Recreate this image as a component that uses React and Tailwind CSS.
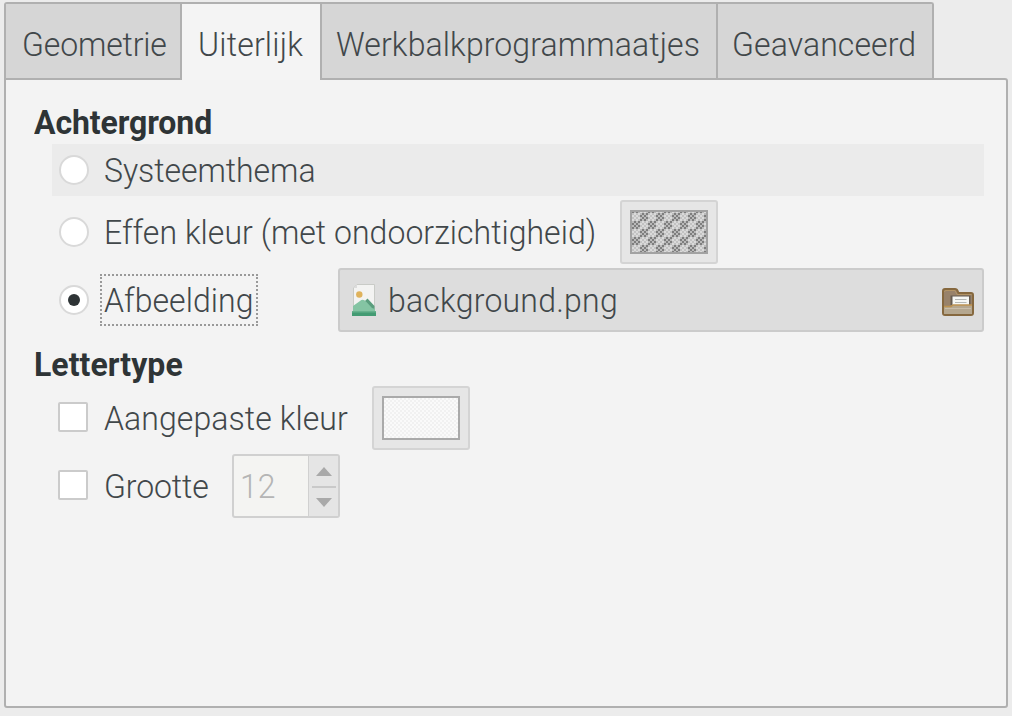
import React from "react";

const tabs = [
  { label: "Geometrie", box: "w-[176px] pl-4", text: "tracking-[-0.15px]" },
  { label: "Uiterlijk", box: "w-[138px] pl-4", text: "tracking-[0.2px]", active: true },
  { label: "Werkbalkprogrammaatjes", box: "w-[398px] pl-[14px] border-l-2", text: "tracking-[0.11px]" },
  { label: "Geavanceerd", box: "w-[214px] pl-[14px]", text: "tracking-[0.1px]" },
];

function Label({ className, children }) {
  return <span className={"inline-block origin-[0_35%] scale-y-[1.06] " + className}>{children}</span>;
}

function Radio({ checked }) {
  return (
    <span className="flex size-[30px] shrink-0 items-center justify-center rounded-full border-2 border-[#d9d9d9] bg-white">
      {checked && <span className="size-3 rounded-full bg-[#2e3436]" />}
    </span>
  );
}

function Checkbox() {
  return <span className="mb-[2px] size-[30px] shrink-0 rounded-[2px] border-2 border-[#cbcbcb] bg-white" />;
}

function ColorButton({ className, children }) {
  return (
    <span className={"flex h-16 w-[98px] shrink-0 items-center justify-center rounded-[3px] border-2 border-[#d4d4d4] bg-[#e6e6e6] " + className}>
      <svg width="78" height="44" viewBox="0 0 78 44">{children}</svg>
    </span>
  );
}

function ImageIcon() {
  return (
    <svg className="ml-3 shrink-0" width="24" height="32" viewBox="0 0 24 32">
      <path d="M5 0.5H22.5V28H1.5V4Z" fill="#f3f3f2" stroke="#c9cbc7" />
      <path d="M5 0.5V4H1.5Z" fill="#dcdcdc" />
      <circle cx="7.300" cy="10.500" r="3.200" fill="#dfb25c" />
      <path d="M11 19L15.500 14.500L22.500 22V28H11Z" fill="#5a9d7d" />
      <path d="M1 22L8 17Q11 14.500 14 17.500L20 24L23 25V28H1Z" fill="#84c4a3" />
      <path d="M0 27H24V32H0Z" fill="#439b73" />
      <path d="M0 27H24V28.500H0Z" fill="#66b18d" />
    </svg>
  );
}

function FolderIcon() {
  return (
    <svg className="mt-1 mr-[8px] ml-auto shrink-0" width="32" height="28" viewBox="0 0 32 28">
      <path d="M1 25V3Q1 1 3 1H13Q15 1 15.500 3L16.500 5H29Q31 5 31 7V25Q31 27 29 27H3Q1 27 1 25Z" fill="#98826a" stroke="#86683e" strokeWidth="2" />
      <path d="M2.500 4Q2.500 2.500 4 2.500H13L15 6.500H29.500" fill="none" stroke="#b39465" />
      <path d="M8.500 7.500H28.500V17H8.500Z" fill="#665c50" />
      <path d="M10.500 8.500H27V19H10.500Z" fill="#f6f7f4" />
      <path d="M13 11.500H24.500M13 14.500H24.500" stroke="#b5b8b5" />
      <path d="M2 18.500H9L11 17H30V26H2Z" fill="#b5a78f" />
      <path d="M2 18.500H9L11 17H30" fill="none" stroke="#bd9350" strokeWidth="1.500" />
      <path d="M3 20.500H29" stroke="#c9bda8" />
    </svg>
  );
}

export default function App() {
  return (
    <div className="h-[716px] w-[1012px] overflow-hidden bg-[#ececec] pt-[2px] pl-1 font-['Roboto','Noto_Sans',sans-serif] text-[32px] leading-[38px] font-light whitespace-nowrap text-[#41474a]">
      <div className="flex h-[76px] w-[930px] rounded-t-[3px] border-t-2 border-r-2 border-l-2 border-[#b0b0b0]">
        {tabs.map((t) => (
          <div
            key={t.label}
            className={"relative shrink-0 border-[#b0b0b0] pt-[21px] " + t.box + (t.active ? " z-10 -mb-[2px] bg-[#f4f4f4]" : " border-r-2 bg-[#d6d6d6] last:border-r-0")}
          >
            <Label className={t.text}>{t.label}</Label>
          </div>
        ))}
      </div>
      <div className="flex h-[630px] w-[1004px] flex-col rounded-r-[3px] rounded-bl-[3px] border-2 border-[#b0b0b0] bg-[#f3f3f3] pr-[22px] pl-7">
        <h2 className="h-16 pt-[23px] font-bold text-[#2e3436]">
          <Label className="tracking-[-0.1px]">Achtergrond</Label>
        </h2>
        <div className="ml-[18px] flex h-[52px] items-center gap-[15px] bg-[#ebebeb] pl-[7px]">
          <Radio />
          <Label className="tracking-[-0.05px]">Systeemthema</Label>
        </div>
        <div className="mt-1 ml-[18px] flex h-16 items-center gap-[15px] pl-[7px]">
          <Radio />
          <Label className="w-[516px] tracking-[0.03px]">Effen kleur (met ondoorzichtigheid)</Label>
          <ColorButton className="-ml-[15px]">
            <defs>
              <pattern id="checks" width="16" height="16" x="2" y="3" patternUnits="userSpaceOnUse">
                <rect width="16" height="16" fill="#dadada" />
                <path d="M8 0H16V8H8ZM0 8H8V16H0Z" fill="#bababa" />
              </pattern>
              <pattern id="dots" width="16" height="16" x="2" y="3" patternUnits="userSpaceOnUse">
                <path d="M0 0H2V2H0ZM4 0H6V2H4ZM2 2H4V4H2ZM6 2H8V4H6ZM0 4H2V6H0ZM4 4H6V6H4ZM2 6H4V8H2ZM6 6H8V8H6ZM8 8H10V10H8ZM12 8H14V10H12ZM10 10H12V12H10ZM14 10H16V12H14ZM8 12H10V14H8ZM12 12H14V14H12ZM10 14H12V16H10ZM14 14H16V16H14Z" fill="#c2c2c2" />
                <path d="M10 0H12V2H10ZM14 0H16V2H14ZM8 2H10V4H8ZM12 2H14V4H12ZM10 4H12V6H10ZM14 4H16V6H14ZM8 6H10V8H8ZM12 6H14V8H12ZM2 8H4V10H2ZM6 8H8V10H6ZM0 10H2V12H0ZM4 10H6V12H4ZM2 12H4V14H2ZM6 12H8V14H6ZM0 14H2V16H0ZM4 14H6V16H4Z" fill="#7e7e7e" />
              </pattern>
            </defs>
            <rect width="78" height="44" fill="url(#checks)" />
            <rect width="78" height="44" fill="url(#dots)" />
            <rect x="1" y="1" width="76" height="42" fill="none" stroke="#a2a2a2" strokeWidth="2" />
          </ColorButton>
        </div>
        <div className="mt-1 ml-[18px] flex h-16 items-center pl-[7px]">
          <Radio checked />
          <span className="ml-[11px] h-[52px] w-[158px] border-2 border-dotted border-[#999] pt-[5px] pl-[2px]">
            <Label className="tracking-[0.05px]">Afbeelding</Label>
          </span>
          <span className="ml-20 flex h-16 w-[646px] shrink-0 items-center rounded-[3px] border-2 border-[#cbcbcb] bg-[#dddddd]">
            <ImageIcon />
            <Label className="ml-3 tracking-[0.23px]">background.png</Label>
            <FolderIcon />
          </span>
        </div>
        <h2 className="h-[54px] pt-[13px] font-bold text-[#2e3436]">
          <Label className="tracking-[0.05px]">Lettertype</Label>
        </h2>
        <div className="ml-[24px] flex h-16 items-center gap-4">
          <Checkbox />
          <Label className="w-[268px] tracking-[0.08px]">Aangepaste kleur</Label>
          <ColorButton className="-ml-4">
            <defs>
              <pattern id="grain" width="4" height="4" patternUnits="userSpaceOnUse">
                <path d="M0 0H2V2H0ZM2 2H4V4H2Z" fill="#f1f1f1" />
              </pattern>
            </defs>
            <rect width="78" height="44" fill="#fafafa" />
            <rect width="78" height="44" fill="url(#grain)" />
            <rect x="1" y="1" width="76" height="42" fill="none" stroke="#aaa" strokeWidth="2" />
          </ColorButton>
        </div>
        <div className="mt-1 ml-[24px] flex h-16 items-center gap-4">
          <Checkbox />
          <Label className="w-[128px] tracking-[-0.1px]">Grootte</Label>
          <span className="-ml-4 flex h-16 w-[108px] shrink-0 rounded-[3px] border-2 border-[#d0d0d0] bg-[#f4f4f2] text-[#b5b5b5]">
            <span className="w-[74px] pt-[11px] pl-[6px]">
              <Label className="tracking-[0px]">12</Label>
            </span>
            <span className="flex w-[30px] flex-col items-center border-l border-[#d0d0d0] bg-[#e5e5e5]">
              <svg width="30" height="60" viewBox="0 0 30 60">
                <path d="M7 20L15 11L23 20ZM7 42H23L15 51Z" fill="#a9a9a9" />
                <path d="M3 31H27" stroke="#c9c9c9" strokeWidth="2" />
              </svg>
            </span>
          </span>
        </div>
      </div>
    </div>
  );
}
